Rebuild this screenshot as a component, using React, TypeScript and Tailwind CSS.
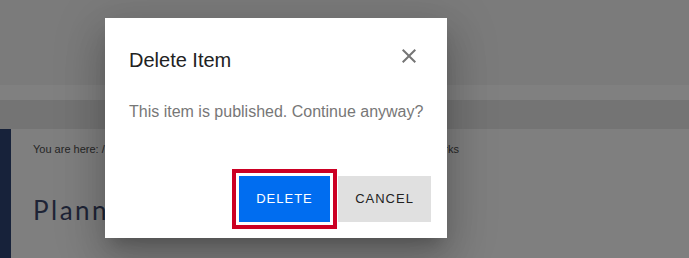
import React from "react";

export default function App() {
  return (
    <div className="relative w-[689px] h-[258px] overflow-hidden bg-[#7f7f7f] font-['Liberation_Sans',Arial,sans-serif]">
      {/* dimmed page underneath */}
      <div className="flex flex-col h-full">
        <div className="h-[85px] bg-[#7b7b7b]" />
        <div className="h-[15px] bg-[#808080]" />
        <div className="h-[29px] bg-[#747474]" />
        <div className="flex flex-1">
          <div className="w-[11px] bg-[#17223a]" />
          <div className="flex-1 bg-[#7f7f7f] pl-[22px]">
            <div className="pt-[12px] w-[426px] flex justify-between text-[11px] leading-[16px] text-[#262626]">
              <span>You are here: / Planning</span>
              <span>Frameworks</span>
            </div>
            <div className="mt-[37px] font-['Lato',sans-serif] text-[26px] leading-[32px] tracking-[2.5px] text-[#1e2436] whitespace-nowrap">
              Planning Frameworks
            </div>
          </div>
        </div>
      </div>

      {/* dialog */}
      <div className="absolute left-[105px] top-[18px] w-[342px] h-[220px] bg-white flex flex-col shadow-[0_11px_15px_-7px_rgba(0,0,0,0.2),0_24px_38px_3px_rgba(0,0,0,0.14),0_9px_46px_8px_rgba(0,0,0,0.12)]">
        <div className="flex items-start justify-between pt-[28px] pl-6 pr-[26px]">
          <h2 className="text-[20px] leading-[28px] text-[#222222]">Delete Item</h2>
          <button className="w-6 h-6 -mt-[2px] flex items-center justify-center text-[#757575]" aria-label="Close">
            <svg width="24" height="24" viewBox="0 0 24 24" fill="currentColor">
              <path d="M19 6.41L17.59 5 12 10.59 6.41 5 5 6.41 10.59 12 5 17.59 6.41 19 12 13.41 17.59 19 19 17.59 13.41 12z" />
            </svg>
          </button>
        </div>
        <p className="mt-[26px] pl-6 text-[16px] leading-[24px] text-[#777777]">
          This item is published. Continue anyway?
        </p>
        <div className="mt-[52px] flex justify-end gap-2 pr-4">
          <button className="w-[91px] h-[46px] bg-[#006df0] text-white text-[13px] tracking-[1px] outline-4 outline-solid outline-[#cc0024] outline-offset-[3px]">
            DELETE
          </button>
          <button className="w-[93px] h-[46px] bg-[#e0e0e0] text-[#222222] text-[13px] tracking-[1px]">
            CANCEL
          </button>
        </div>
      </div>
    </div>
  );
}
